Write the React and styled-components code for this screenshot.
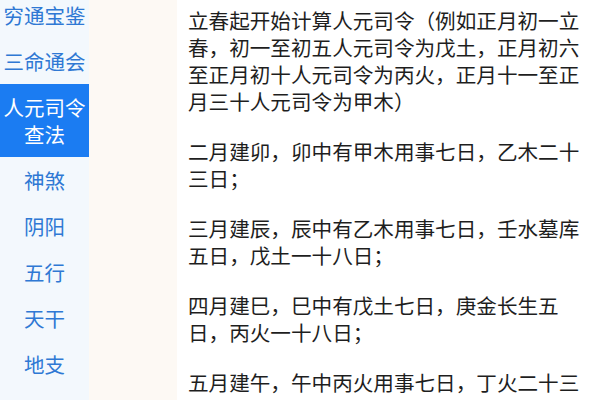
import React from "react";
import styled, { createGlobalStyle } from "styled-components";

const GlobalStyle = createGlobalStyle`
  html, body {
    margin: 0;
    padding: 0;
    background: #ffffff;
  }
  body {
    font-family: "Noto Sans CJK SC", "Noto Sans", sans-serif;
  }
`;

const menuItems = [
  ["穷通宝鉴"],
  ["三命通会"],
  ["人元司令", "查法"],
  ["神煞"],
  ["阴阳"],
  ["五行"],
  ["天干"],
  ["地支"],
];

const paragraphs = [
  "立春起开始计算人元司令（例如正月初一立春，初一至初五人元司令为戊土，正月初六至正月初十人元司令为丙火，正月十一至正月三十人元司令为甲木）",
  "二月建卯，卯中有甲木用事七日，乙木二十三日；",
  "三月建辰，辰中有乙木用事七日，壬水墓库五日，戊土一十八日；",
  "四月建巳，巳中有戊土七日，庚金长生五日，丙火一十八日；",
  "五月建午，午中丙火用事七日，丁火二十三日；",
];

const App = () => {
  return (
    <>
      <GlobalStyle />
      <Page>
        <SideMenu>
          {menuItems.map((lines, index) => (
            <MenuItem key={index} $active={index === 2}>
              {lines.map((line) => (
                <span key={line}>{line}</span>
              ))}
            </MenuItem>
          ))}
        </SideMenu>
        <Gutter />
        <Article>
          {paragraphs.map((text, index) => (
            <Paragraph key={index}>{text}</Paragraph>
          ))}
        </Article>
      </Page>
    </>
  );
};

const Page = styled.div`
  display: flex;
  width: 600px;
  height: 400px;
  overflow: hidden;
`;

const SideMenu = styled.nav`
  display: flex;
  flex-direction: column;
  width: 89px;
  flex-shrink: 0;
  margin-top: -8px;
  background-color: #f3f8fd;
`;

const MenuItem = styled.div`
  display: flex;
  flex-direction: column;
  align-items: center;
  justify-content: center;
  height: ${(p) => (p.$active ? "73px" : "46px")};
  flex-shrink: 0;
  font-size: 20.5px;
  line-height: 27px;
  color: ${(p) => (p.$active ? "#ffffff" : "#2f78d4")};
  background-color: ${(p) => (p.$active ? "#1b7cf2" : "transparent")};
`;

const Gutter = styled.div`
  width: 88px;
  flex-shrink: 0;
  background-color: #fdf9f4;
`;

const Article = styled.main`
  flex: 1;
  padding: 7px 16px 0 11px;
  background-color: #ffffff;
`;

const Paragraph = styled.p`
  margin: 0 0 23px;
  font-size: 20.6px;
  line-height: 27px;
  color: #1e1e1e;
  word-break: break-all;
`;

export default App;
